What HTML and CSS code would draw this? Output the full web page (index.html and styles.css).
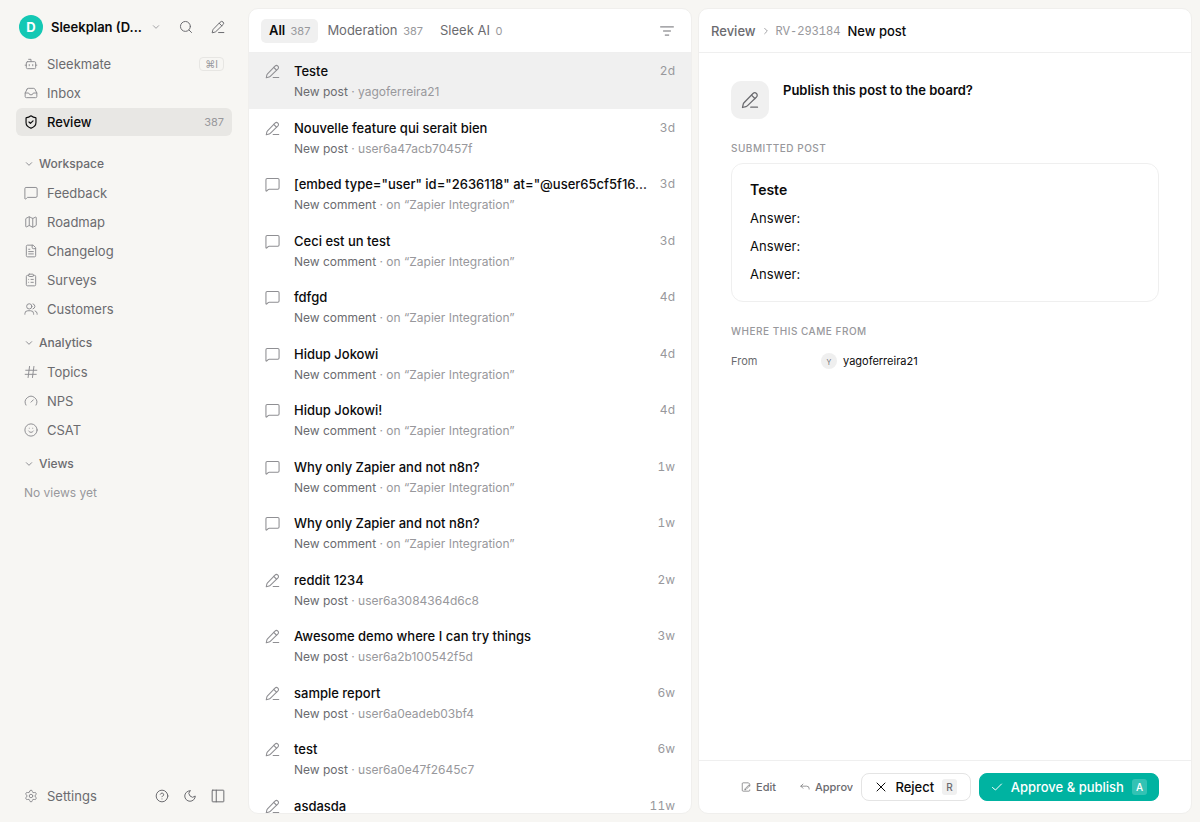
FILE: index.html
```html
<!DOCTYPE html>
<html lang="en">
<head>
    <meta charset="UTF-8">
    <meta name="viewport" content="width=device-width, initial-scale=1.0">
    <title>Review - Sleekplan</title>
    <link rel="stylesheet" href="styles.css">
</head>
<body>
    <!-- Icon sprite -->
    <svg class="sprite" aria-hidden="true">
        <symbol id="i-pen" viewBox="0 0 24 24"><path d="M13 21.500h9"/><path d="M16 3.400a3.200 3.200 0 0 1 4.700 4.500L8.400 19.800a4 4 0 0 1-1.800 1L2 22l1-4.500a4 4 0 0 1 1-1.800z"/><path d="m14 5.500 4.500 4.500"/></symbol>
        <symbol id="i-comment" viewBox="0 0 24 24"><path d="M22.500 17.500a2 2 0 0 1-2 2H6.500a2 2 0 0 0-1.400.600l-2.200 2.200a.8.8 0 0 1-1.400-.6V4.500a2 2 0 0 1 2-2h17a2 2 0 0 1 2 2z"/></symbol>
        <symbol id="i-down" viewBox="0 0 24 24"><path d="m4 8 8 8 8-8"/></symbol>
        <symbol id="i-right" viewBox="0 0 24 24"><path d="m8 4 8 8-8 8"/></symbol>
        <symbol id="i-search" viewBox="0 0 24 24"><circle cx="11" cy="11" r="8.500"/><path d="m21.500 21.500-4.300-4.300"/></symbol>
        <symbol id="i-bot" viewBox="0 0 24 24"><path d="M12 8V4H8"/><rect x="4" y="8" width="16" height="12" rx="2"/><path d="M2 14h2M20 14h2M15 13v2M9 13v2"/></symbol>
        <symbol id="i-inbox" viewBox="0 0 24 24"><path d="M22 12h-6l-2 3h-4l-2-3H2"/><path d="M5.450 5.110 2 12v6a2 2 0 0 0 2 2h16a2 2 0 0 0 2-2v-6l-3.450-6.890A2 2 0 0 0 16.760 4H7.240a2 2 0 0 0-1.790 1.110z"/></symbol>
        <symbol id="i-shield" viewBox="0 0 24 24"><path d="M20.500 13c0 5-3.500 8-8.160 9.500a1 1 0 0 1-.67-.01C7 21 3.500 18 3.500 13V5.500a1 1 0 0 1 1-1c2 0 5-1.200 6.740-2.720a1.170 1.170 0 0 1 1.520 0C14.510 3.310 17.500 4.500 19.500 4.500a1 1 0 0 1 1 1z"/><path d="m8.500 12 2.500 2.500 4.500-4.500"/></symbol>
        <symbol id="i-map" viewBox="0 0 24 24"><path d="M14.106 5.553a2 2 0 0 0 1.788 0l3.659-1.830A1 1 0 0 1 21 4.619v12.764a1 1 0 0 1-.553.894l-4.553 2.277a2 2 0 0 1-1.788 0l-4.212-2.106a2 2 0 0 0-1.788 0l-3.659 1.830A1 1 0 0 1 3 19.381V6.618a1 1 0 0 1 .553-.894l4.553-2.277a2 2 0 0 1 1.788 0z"/><path d="M15 5.764v15M9 3.236v15"/></symbol>
        <symbol id="i-file" viewBox="0 0 24 24"><path d="M15 2H6a2 2 0 0 0-2 2v16a2 2 0 0 0 2 2h12a2 2 0 0 0 2-2V7z"/><path d="M14 2v4a2 2 0 0 0 2 2h4M10 9H8M16 13H8M16 17H8"/></symbol>
        <symbol id="i-clipboard" viewBox="0 0 24 24"><rect x="8" y="2" width="8" height="4" rx="1"/><path d="M16 4h2a2 2 0 0 1 2 2v14a2 2 0 0 1-2 2H6a2 2 0 0 1-2-2V6a2 2 0 0 1 2-2h2M12 11h4M12 16h4M8 11h.01M8 16h.01"/></symbol>
        <symbol id="i-users" viewBox="0 0 24 24"><circle cx="9" cy="7.500" r="4.500"/><path d="M1.500 21v-1a5 5 0 0 1 5-5h5a5 5 0 0 1 5 5v1M15.500 3.200a4.500 4.500 0 0 1 0 8.600M22.500 21v-1a5 5 0 0 0-3.500-4.700"/></symbol>
        <symbol id="i-hash" viewBox="0 0 24 24"><path d="M3 9h19M2 16h19M9.500 2.500 7 21.500M17 2.500l-2.500 19"/></symbol>
        <symbol id="i-gauge" viewBox="0 0 24 24"><path d="m12 14 4-4M3.340 19a10 10 0 1 1 17.320 0"/></symbol>
        <symbol id="i-smile" viewBox="0 0 24 24"><circle cx="12" cy="12" r="10.500"/><path d="M8 14s1.500 2 4 2 4-2 4-2M9 9h.01M15 9h.01"/></symbol>
        <symbol id="i-gear" viewBox="0 0 24 24"><path d="M9.671 4.136a2.340 2.340 0 0 1 4.659 0 2.340 2.340 0 0 0 3.319 1.915 2.340 2.340 0 0 1 2.330 4.033 2.340 2.340 0 0 0 0 3.831 2.340 2.340 0 0 1-2.330 4.033 2.340 2.340 0 0 0-3.319 1.915 2.340 2.340 0 0 1-4.659 0 2.340 2.340 0 0 0-3.320-1.915 2.340 2.340 0 0 1-2.330-4.033 2.340 2.340 0 0 0 0-3.831A2.340 2.340 0 0 1 6.350 6.051a2.340 2.340 0 0 0 3.319-1.915"/><circle cx="12" cy="12" r="3"/></symbol>
        <symbol id="i-help" viewBox="0 0 24 24"><circle cx="12" cy="12" r="10"/><path d="M9.090 9a3 3 0 0 1 5.830 1c0 2-3 3-3 3M12 17h.01"/></symbol>
        <symbol id="i-moon" viewBox="0 0 24 24"><path d="M12 3a6 6 0 0 0 9 9 9 9 0 1 1-9-9Z"/></symbol>
        <symbol id="i-panel" viewBox="0 0 24 24"><rect x="2" y="2" width="20" height="20" rx="1"/><path d="M9 2v20"/></symbol>
        <symbol id="i-filter" viewBox="0 0 24 24"><path d="M1 5h22M6 12h12M9 19h6"/></symbol>
        <symbol id="i-edit" viewBox="0 0 24 24"><path d="M21 9V5l-3-3H5a2 2 0 0 0-2 2v16a2 2 0 0 0 2 2h14a2 2 0 0 0 2-2v-1"/><path d="m20 10-8 8-3 1 1-3 8-8z"/></symbol>
        <symbol id="i-reply" viewBox="0 0 24 24"><path d="M7 5 2 10l5 5M2 10h14a6 6 0 0 1 6 6v1"/></symbol>
        <symbol id="i-x" viewBox="0 0 24 24"><path d="M20 4 4 20M4 4l16 16"/></symbol>
        <symbol id="i-check" viewBox="0 0 24 24"><path d="M21 6 9 18l-6-5"/></symbol>
    </svg>

    <div class="app">
        <aside class="sidebar">
            <div class="workspace">
                <button class="workspace-switch">
                    <span class="logo">D</span>
                    <span class="workspace-name">Sleekplan (D...</span>
                    <svg class="icon chevron"><use href="#i-down"/></svg>
                </button>
                <button class="icon-btn" aria-label="Search"><svg class="icon"><use href="#i-search"/></svg></button>
                <button class="icon-btn" aria-label="New post"><svg class="icon"><use href="#i-pen"/></svg></button>
            </div>

            <nav class="nav">
                <a href="#" class="nav-item"><svg class="icon"><use href="#i-bot"/></svg>Sleekmate<kbd>⌘I</kbd></a>
                <a href="#" class="nav-item"><svg class="icon"><use href="#i-inbox"/></svg>Inbox</a>
                <a href="#" class="nav-item active"><svg class="icon"><use href="#i-shield"/></svg>Review<span class="nav-count">387</span></a>
            </nav>

            <nav class="nav nav-main">
                <button class="nav-label"><svg class="icon chevron"><use href="#i-down"/></svg>Workspace</button>
                <a href="#" class="nav-item"><svg class="icon"><use href="#i-comment"/></svg>Feedback</a>
                <a href="#" class="nav-item"><svg class="icon"><use href="#i-map"/></svg>Roadmap</a>
                <a href="#" class="nav-item"><svg class="icon"><use href="#i-file"/></svg>Changelog</a>
                <a href="#" class="nav-item"><svg class="icon"><use href="#i-clipboard"/></svg>Surveys</a>
                <a href="#" class="nav-item"><svg class="icon"><use href="#i-users"/></svg>Customers</a>
            </nav>

            <nav class="nav">
                <button class="nav-label"><svg class="icon chevron"><use href="#i-down"/></svg>Analytics</button>
                <a href="#" class="nav-item"><svg class="icon"><use href="#i-hash"/></svg>Topics</a>
                <a href="#" class="nav-item"><svg class="icon"><use href="#i-gauge"/></svg>NPS</a>
                <a href="#" class="nav-item"><svg class="icon"><use href="#i-smile"/></svg>CSAT</a>
            </nav>

            <nav class="nav">
                <button class="nav-label"><svg class="icon chevron"><use href="#i-down"/></svg>Views</button>
                <p class="nav-empty">No views yet</p>
            </nav>

            <div class="sidebar-footer">
                <a href="#" class="nav-item"><svg class="icon"><use href="#i-gear"/></svg>Settings</a>
                <button class="icon-btn" aria-label="Help"><svg class="icon"><use href="#i-help"/></svg></button>
                <button class="icon-btn" aria-label="Dark mode"><svg class="icon"><use href="#i-moon"/></svg></button>
                <button class="icon-btn" aria-label="Toggle sidebar"><svg class="icon"><use href="#i-panel"/></svg></button>
            </div>
        </aside>

        <section class="panel list-panel">
            <header class="panel-header">
                <button class="tab active">All <span>387</span></button>
                <button class="tab">Moderation <span>387</span></button>
                <button class="tab">Sleek AI <span>0</span></button>
                <button class="icon-btn filter" aria-label="Filter"><svg class="icon"><use href="#i-filter"/></svg></button>
            </header>
            <ul class="items">
                <li class="item selected">
                    <svg class="icon"><use href="#i-pen"/></svg>
                    <div class="item-text"><h3>Teste</h3><p>New post <i>·</i> <span>yagoferreira21</span></p></div>
                    <time>2d</time>
                </li>
                <li class="item">
                    <svg class="icon"><use href="#i-pen"/></svg>
                    <div class="item-text"><h3>Nouvelle feature qui serait bien</h3><p>New post <i>·</i> <span>user6a47acb70457f</span></p></div>
                    <time>3d</time>
                </li>
                <li class="item">
                    <svg class="icon"><use href="#i-comment"/></svg>
                    <div class="item-text"><h3>[embed type="user" id="2636118" at="@user65cf5f16...</h3><p>New comment <i>·</i> <span>on “Zapier Integration”</span></p></div>
                    <time>3d</time>
                </li>
                <li class="item">
                    <svg class="icon"><use href="#i-comment"/></svg>
                    <div class="item-text"><h3>Ceci est un test</h3><p>New comment <i>·</i> <span>on “Zapier Integration”</span></p></div>
                    <time>3d</time>
                </li>
                <li class="item">
                    <svg class="icon"><use href="#i-comment"/></svg>
                    <div class="item-text"><h3>fdfgd</h3><p>New comment <i>·</i> <span>on “Zapier Integration”</span></p></div>
                    <time>4d</time>
                </li>
                <li class="item">
                    <svg class="icon"><use href="#i-comment"/></svg>
                    <div class="item-text"><h3>Hidup Jokowi</h3><p>New comment <i>·</i> <span>on “Zapier Integration”</span></p></div>
                    <time>4d</time>
                </li>
                <li class="item">
                    <svg class="icon"><use href="#i-comment"/></svg>
                    <div class="item-text"><h3>Hidup Jokowi!</h3><p>New comment <i>·</i> <span>on “Zapier Integration”</span></p></div>
                    <time>4d</time>
                </li>
                <li class="item">
                    <svg class="icon"><use href="#i-comment"/></svg>
                    <div class="item-text"><h3>Why only Zapier and not n8n?</h3><p>New comment <i>·</i> <span>on “Zapier Integration”</span></p></div>
                    <time>1w</time>
                </li>
                <li class="item">
                    <svg class="icon"><use href="#i-comment"/></svg>
                    <div class="item-text"><h3>Why only Zapier and not n8n?</h3><p>New comment <i>·</i> <span>on “Zapier Integration”</span></p></div>
                    <time>1w</time>
                </li>
                <li class="item">
                    <svg class="icon"><use href="#i-pen"/></svg>
                    <div class="item-text"><h3>reddit 1234</h3><p>New post <i>·</i> <span>user6a3084364d6c8</span></p></div>
                    <time>2w</time>
                </li>
                <li class="item">
                    <svg class="icon"><use href="#i-pen"/></svg>
                    <div class="item-text"><h3>Awesome demo where I can try things</h3><p>New post <i>·</i> <span>user6a2b100542f5d</span></p></div>
                    <time>3w</time>
                </li>
                <li class="item">
                    <svg class="icon"><use href="#i-pen"/></svg>
                    <div class="item-text"><h3>sample report</h3><p>New post <i>·</i> <span>user6a0eadeb03bf4</span></p></div>
                    <time>6w</time>
                </li>
                <li class="item">
                    <svg class="icon"><use href="#i-pen"/></svg>
                    <div class="item-text"><h3>test</h3><p>New post <i>·</i> <span>user6a0e47f2645c7</span></p></div>
                    <time>6w</time>
                </li>
                <li class="item">
                    <svg class="icon"><use href="#i-pen"/></svg>
                    <div class="item-text"><h3>asdasda</h3></div>
                    <time>11w</time>
                </li>
            </ul>
        </section>

        <main class="panel detail-panel">
            <header class="panel-header breadcrumb">
                <a href="#">Review</a>
                <svg class="icon chevron"><use href="#i-right"/></svg>
                <span class="ref">RV-293184</span>
                <strong>New post</strong>
            </header>

            <div class="detail-body">
                <div class="question">
                    <span class="tile"><svg class="icon"><use href="#i-pen"/></svg></span>
                    <h1>Publish this post to the board?</h1>
                </div>

                <h2>Submitted post</h2>
                <article class="card">
                    <h3>Teste</h3>
                    <p>Answer:</p>
                    <p>Answer:</p>
                    <p>Answer:</p>
                </article>

                <h2>Where this came from</h2>
                <dl class="source">
                    <dt>From</dt>
                    <dd><span class="avatar">Y</span>yagoferreira21</dd>
                </dl>
            </div>

            <footer class="actions">
                <div class="minor-actions">
                    <button class="link-btn"><svg class="icon"><use href="#i-edit"/></svg>Edit</button>
                    <button class="link-btn"><svg class="icon"><use href="#i-reply"/></svg>Approve</button>
                </div>
                <button class="btn reject"><svg class="icon"><use href="#i-x"/></svg>Reject<kbd>R</kbd></button>
                <button class="btn primary"><svg class="icon"><use href="#i-check"/></svg>Approve &amp; publish<kbd>A</kbd></button>
            </footer>
        </main>
    </div>
</body>
</html>
```
FILE: styles.css
```css
/* General Styles */
* {
    box-sizing: border-box;
}
body {
    margin: 0;
    font-family: Inter, "Liberation Sans", sans-serif;
    font-size: 13px;
    line-height: 20px;
    color: #0b0b0c;
    background: #f7f6f3;
}
h1, h2, h3, p, ul, dl, dd {
    margin: 0;
    padding: 0;
}
a {
    color: inherit;
    text-decoration: none;
}
button {
    margin: 0;
    padding: 0;
    border: none;
    background: none;
    font: inherit;
    color: inherit;
    cursor: pointer;
}
kbd {
    font-family: inherit;
}
.sprite {
    display: none;
}
.icon {
    width: 14px;
    height: 14px;
    flex: none;
    fill: none;
    stroke: currentColor;
    stroke-width: 1.7;
    stroke-linecap: round;
    stroke-linejoin: round;
}
.icon.chevron {
    width: 8px;
    height: 8px;
    stroke-width: 3;
}
.icon-btn {
    display: flex;
    align-items: center;
    justify-content: center;
    width: 28px;
    height: 28px;
    flex: none;
    color: #6b6b6f;
}
.app {
    display: grid;
    grid-template-columns: 232px minmax(320px, 37vw) minmax(0, 1fr);
    height: 100vh;
    padding: 8px 8px 8px 0;
}

/* Sidebar Styles */
.sidebar {
    display: flex;
    flex-direction: column;
    padding-left: 16px;
}
.workspace {
    display: flex;
    align-items: center;
    height: 38px;
    margin-bottom: 4px;
}
.workspace-switch {
    display: flex;
    flex: 1;
    align-items: center;
    min-width: 0;
    padding-left: 3px;
    font-weight: 600;
}
.workspace-name {
    flex: 1;
    text-align: left;
    white-space: nowrap;
}
.workspace-switch .chevron {
    margin-right: 12px;
    color: #a3a3a6;
}
.workspace .icon-btn:last-child {
    margin-left: 4px;
}
.logo {
    display: grid;
    place-items: center;
    width: 24px;
    height: 24px;
    margin-right: 8px;
    border-radius: 50%;
    background: #14c8b4;
    color: #fff;
    font-size: 13px;
    font-weight: 700;
}
.nav {
    display: flex;
    flex-direction: column;
    gap: 1px;
    margin-bottom: 6px;
}
.nav-main {
    margin-top: 8px;
}
.nav-item {
    display: flex;
    align-items: center;
    gap: 9px;
    height: 28px;
    padding: 0 8px;
    border-radius: 6px;
    color: #6b6b6f;
}
.nav-item .icon {
    color: #8f8f93;
}
.nav-item.active {
    background: #e8e7e4;
    color: #0b0b0c;
    font-weight: 500;
}
.nav-item.active .icon {
    color: #0b0b0c;
    stroke-width: 2;
}
.nav-item kbd {
    margin-left: auto;
    padding: 0 5px;
    border: 1px solid #e7e6e3;
    border-radius: 4px;
    font-size: 10px;
    line-height: 12px;
    color: #98989c;
}
.nav-count {
    margin-left: auto;
    font-size: 11px;
    font-weight: 400;
    color: #98989c;
}
.nav-label {
    display: flex;
    align-items: center;
    gap: 6px;
    height: 28px;
    padding: 0 9px;
    font-size: 12px;
    font-weight: 500;
    color: #6b6b6f;
}
.nav-label .icon {
    color: #8f8f93;
}
.nav-empty {
    padding: 4px 8px;
    font-size: 12px;
    color: #98989c;
}
.sidebar-footer {
    display: flex;
    align-items: center;
    margin-top: auto;
    margin-bottom: 4px;
}
.sidebar-footer .nav-item {
    flex: 1;
}

/* Panel Styles */
.panel {
    display: flex;
    flex-direction: column;
    min-width: 0;
    min-height: 0;
    border: 1px solid #f0efed;
    border-radius: 10px;
    background: #fff;
    overflow: hidden;
}
.list-panel {
    margin-left: 16px;
    margin-right: -16px;
}
.detail-panel {
    margin-left: 22px;
}
.panel-header {
    display: flex;
    align-items: center;
    height: 44px;
    flex: none;
    padding: 0 12px;
    border-bottom: 1px solid #efefef;
}

/* List Styles */
.tab {
    height: 24px;
    padding: 0 8px;
    margin-right: 1px;
    border-radius: 5px;
    color: #6b6b6f;
}
.tab span {
    margin-left: 2px;
    font-size: 11px;
    font-weight: 400;
    color: #98989c;
}
.tab.active {
    background: #f0f0f0;
    color: #0b0b0c;
    font-weight: 600;
}
.filter {
    width: 24px;
    margin-left: auto;
}
.items {
    flex: 1;
    overflow: hidden;
    list-style: none;
}
.item {
    display: flex;
    height: 56px;
    padding: 8px 16px;
}
.item:nth-child(odd) {
    margin-bottom: 1px;
}
.item.selected {
    background: #f0f0f0;
}
.item .icon {
    width: 15px;
    height: 15px;
    margin: 3px 14px 0 0;
    color: #8f8f93;
}
.item-text {
    flex: 1;
    min-width: 0;
}
.item h3 {
    font-size: 13px;
    font-weight: 500;
    line-height: 20px;
    white-space: nowrap;
}
.item p {
    margin-top: 2px;
    font-size: 12px;
    line-height: 18px;
    color: #6b6b6f;
}
.item i {
    font-style: normal;
}
.item i, .item span {
    color: #98989c;
}
.item time {
    margin-left: 12px;
    font-size: 12px;
    font-variant-numeric: tabular-nums;
    color: #98989c;
}

/* Detail Styles */
.breadcrumb a {
    font-weight: 500;
    color: #6b6b6f;
}
.breadcrumb .icon {
    margin: 0 6px;
    color: #a3a3a6;
}
.breadcrumb strong {
    margin-left: 7px;
    font-weight: 500;
}
.ref {
    padding-top: 2px;
    font-family: "Liberation Mono", monospace;
    font-size: 12px;
    line-height: 16px;
    color: #98989c;
}
.detail-body {
    flex: 1;
    padding: 28px 32px;
    overflow: auto;
}
.question {
    display: flex;
    gap: 14px;
    margin-bottom: 20px;
}
.question h1 {
    font-size: 13px;
    font-weight: 600;
    line-height: 18px;
}
.tile {
    display: grid;
    place-items: center;
    width: 38px;
    height: 38px;
    border-radius: 10px;
    background: #f0f0f0;
    color: #6b6b6f;
}
.tile .icon {
    width: 18px;
    height: 18px;
}
.detail-body h2 {
    font-size: 10px;
    font-weight: 500;
    line-height: 18px;
    letter-spacing: 0.5px;
    text-transform: uppercase;
    color: #98989c;
}
.card {
    margin: 6px 0 20px;
    padding: 15px 18px 16px;
    border: 1px solid #efefef;
    border-radius: 12px;
}
.card h3 {
    font-size: 14px;
    font-weight: 600;
    line-height: 22px;
}
.card p {
    margin-top: 6px;
    line-height: 22px;
}
.source {
    display: flex;
    align-items: center;
    margin-top: 11px;
    font-size: 11px;
}
.source dt {
    width: 90px;
    color: #6b6b6f;
}
.source dd {
    display: flex;
    align-items: center;
    gap: 6px;
}
.avatar {
    display: grid;
    place-items: center;
    width: 16px;
    height: 16px;
    border-radius: 50%;
    background: #efefef;
    color: #6b6b6f;
    font-size: 7px;
}

/* Footer Actions */
.actions {
    display: flex;
    align-items: center;
    gap: 8px;
    padding: 12px 32px;
    border-top: 1px solid #efefef;
}
.minor-actions {
    display: flex;
    flex: 1;
    gap: 4px;
    min-width: 0;
    overflow: hidden;
}
.link-btn {
    display: flex;
    align-items: center;
    gap: 5px;
    padding: 0 10px;
    flex: none;
    font-size: 11px;
    font-weight: 500;
    color: #6b6b6f;
}
.link-btn .icon {
    width: 10px;
    height: 10px;
}
.btn {
    display: flex;
    align-items: center;
    gap: 8px;
    height: 28px;
    padding: 0 11px;
    flex: none;
    border: 1px solid #e4e4e4;
    border-radius: 8px;
    font-weight: 500;
}
.btn.reject {
    padding: 0 13px;
}
.btn .icon {
    width: 12px;
    height: 12px;
    stroke-width: 2;
}
.btn kbd {
    padding: 0 4px;
    border-radius: 3px;
    background: #f0f0f0;
    color: #6b6b6f;
    font-size: 10px;
    line-height: 16px;
}
.btn.primary {
    border-color: #00b3a1;
    background: #00b3a1;
    color: #fff;
}
.btn.primary kbd {
    background: #33c2b4;
    color: #fff;
}
```
